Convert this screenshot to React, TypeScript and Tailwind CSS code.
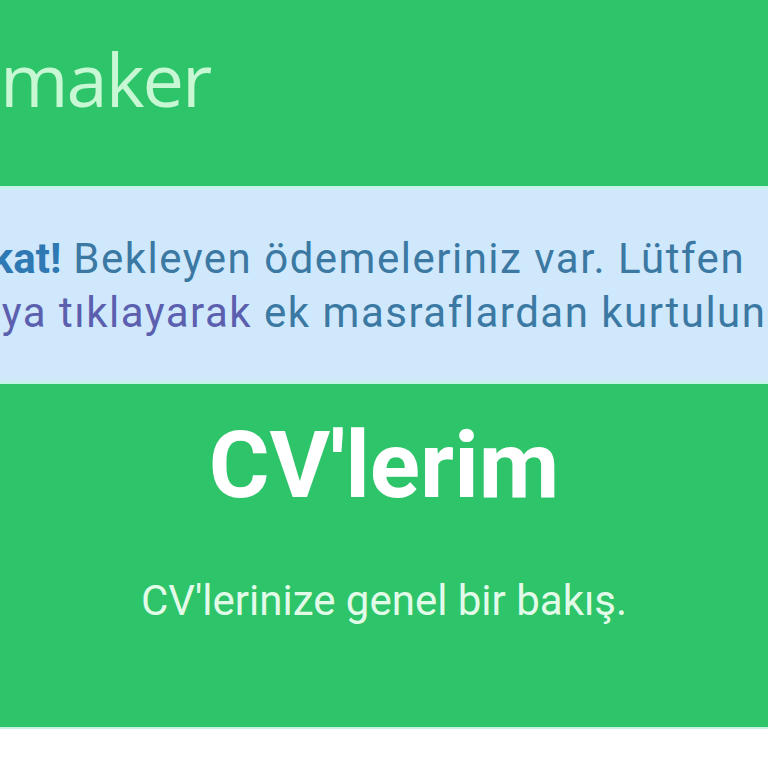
export default function App() {
  return (
    <div className="w-[768px] h-[768px] overflow-hidden bg-white" style={{ fontFamily: "Roboto, 'Noto Sans', sans-serif" }}>
      {/* Brand bar */}
      <header className="h-[186px] bg-[#2ec46a] pt-[42px] overflow-hidden">
        <span
          className="block text-[74px] leading-none tracking-[-2px] text-[#c8f7d4] whitespace-nowrap"
          style={{ fontFamily: "'Open Sans', sans-serif" }}
        >
          maker
        </span>
      </header>

      {/* Payment notice */}
      <div className="h-[198px] bg-[#cfe8fc] border-y-[3px] border-[#c2f3e6] pt-[43px] overflow-hidden text-[42px] leading-[54px] tracking-[1.5px] text-[#3b79a3] whitespace-nowrap">
        <p className="-ml-[70px]">
          <strong className="font-bold tracking-normal text-[#2e79b3]">Dikkat!</strong> Bekleyen ödemeleriniz var. Lütfen
        </p>
        <p className="-ml-[87px]">
          <a className="text-[#5b5fae]">buraya tıklayarak</a> ek masraflardan kurtulun.
        </p>
      </div>

      {/* Page title */}
      <section className="h-[345px] bg-[#2ec46a] border-b-2 border-[#c6f3df] pt-[35px] text-center">
        <h1 className="text-[93px] leading-none font-bold text-white">CV'lerim</h1>
        <p className="mt-[68px] text-[42px] leading-none text-[#e2fbe8]">CV'lerinize genel bir bakış.</p>
      </section>
    </div>
  );
}
